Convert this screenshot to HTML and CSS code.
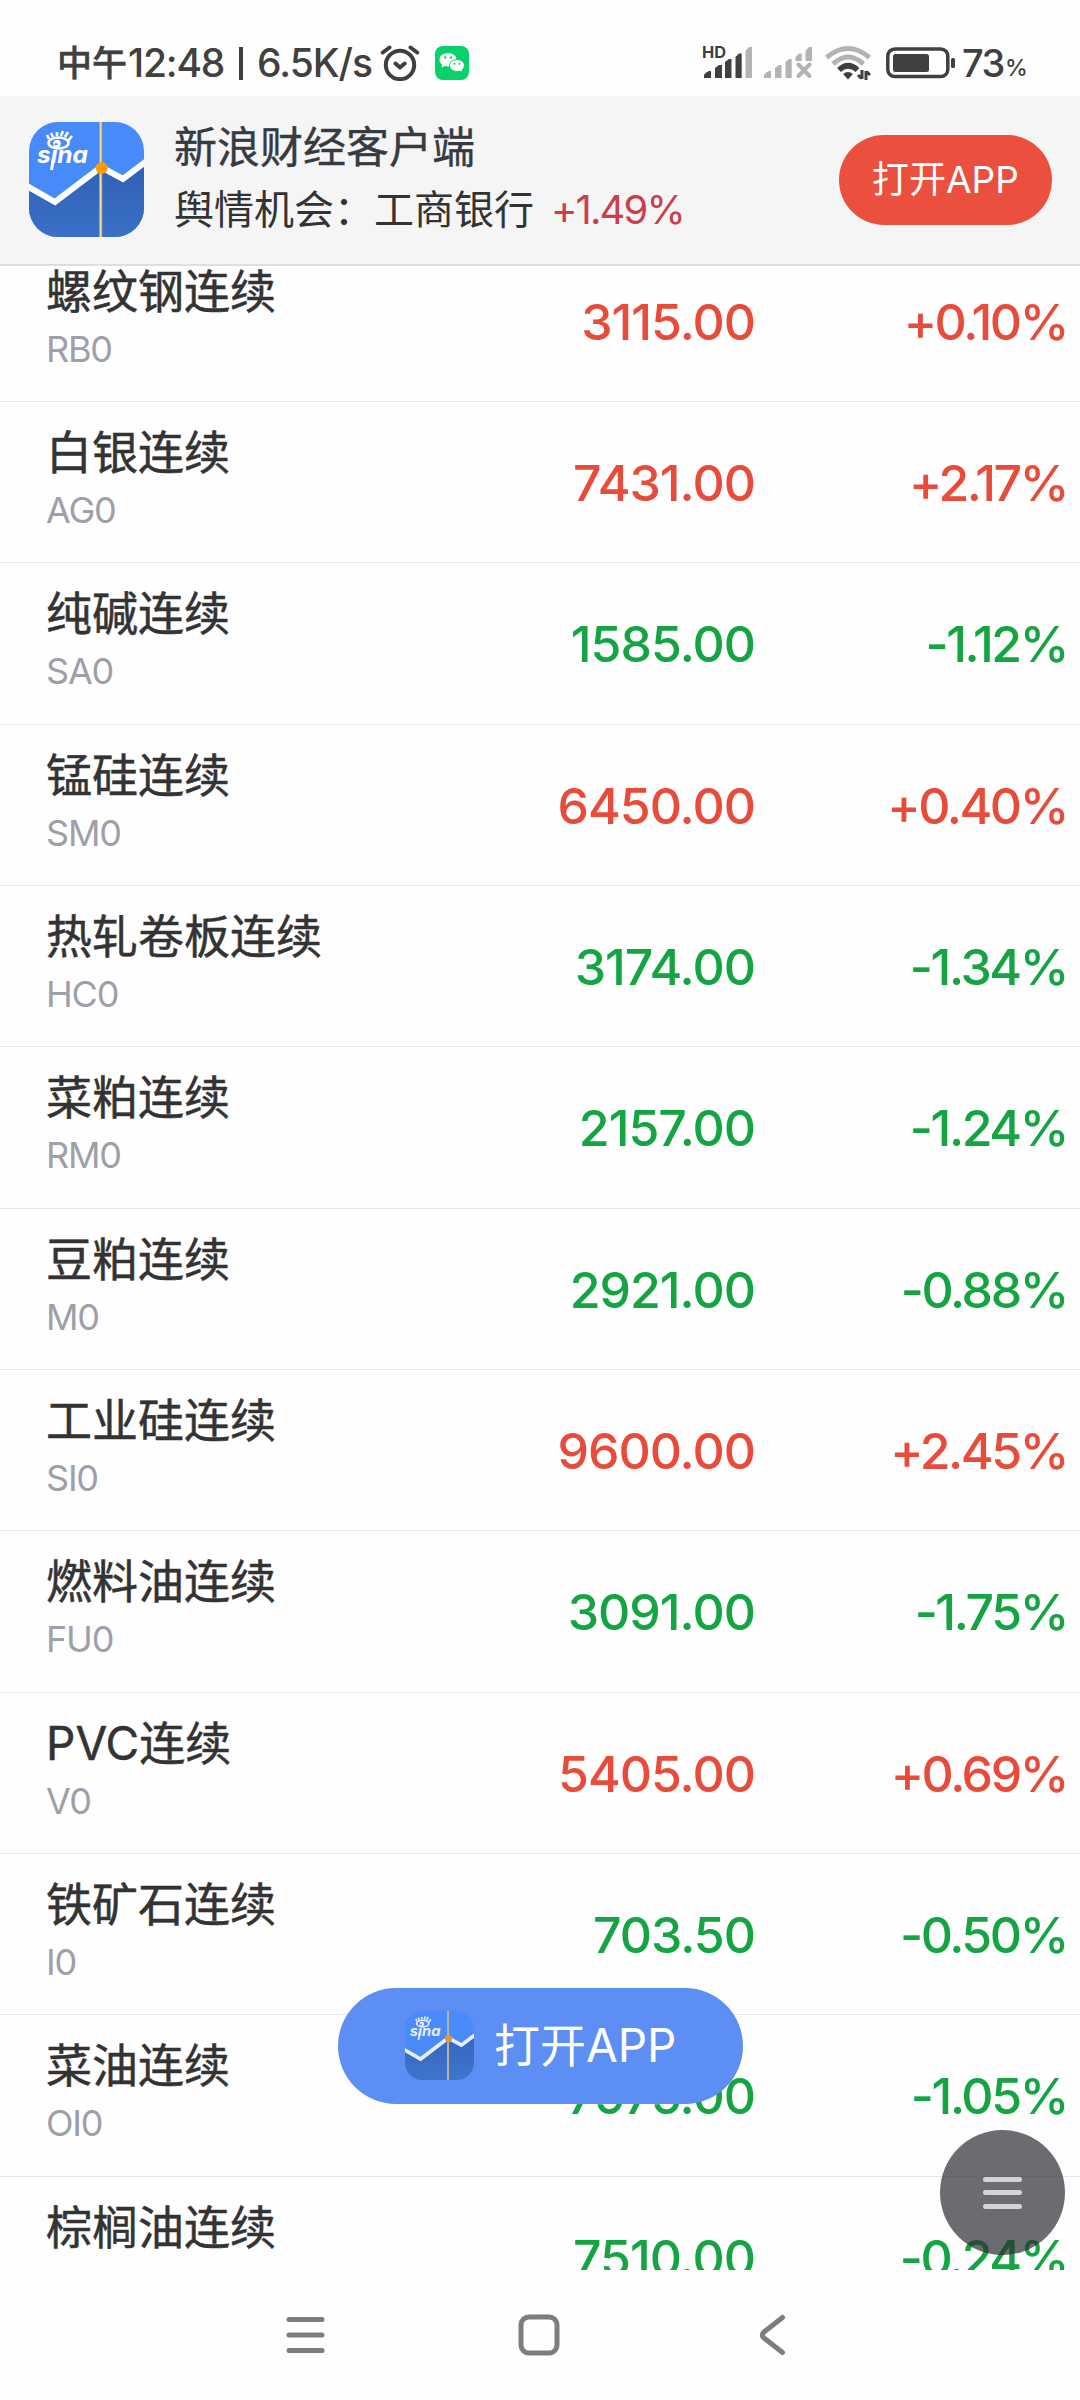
FILE: index.html
```html
<!DOCTYPE html>
<html lang="zh-CN">
<head>
  <meta charset="UTF-8">
  <meta name="viewport" content="width=device-width, initial-scale=1.0">
  <title>新浪财经</title>
  <link rel="stylesheet" href="styles.css">
</head>
<body>

<!-- app logo, used in the header and in the floating button -->
<svg class="defs" width="0" height="0">
  <defs>
    <linearGradient id="shade" x1="0" y1="0" x2="0" y2="1">
      <stop offset="0" stop-color="#2f61b5"/>
      <stop offset="1" stop-color="#3b70c8"/>
    </linearGradient>
    <clipPath id="logo-clip"><rect width="115" height="115" rx="29"/></clipPath>
  </defs>
  <symbol id="logo" viewBox="0 0 115 115">
    <g clip-path="url(#logo-clip)">
      <rect width="115" height="115" fill="#478bfb"/>
      <path d="M0 65 L26 79 L72 46 L94 57 L115 41 V115 H0Z" fill="url(#shade)"/>
      <path d="M-4 63 L26 80 L72 45 L94 57 L119 38" fill="none" stroke="#fff" stroke-width="6"/>
      <rect x="70" width="3.4" height="115" fill="#8f9789"/>
      <rect x="70.8" width="1.7" height="115" fill="#f3df9a"/>
      <circle cx="72.700" cy="46" r="6" fill="#ff9a05"/>
      <ellipse cx="29.500" cy="21" rx="10" ry="5.500" fill="none" stroke="#fff" stroke-width="2.600"/>
      <circle cx="28" cy="21.500" r="3.800" fill="#fff"/>
      <circle cx="27" cy="22.500" r="1.500" fill="#478bfb"/>
      <path d="M20 17 L18 13 M24 15 L22 11 M28 14 L28 10 M32 14 L34 9 M36 15 L39 10 M39 19 L43 14" stroke="#fff" stroke-width="2.600"/>
      <text class="logo-text" x="8" y="41" textLength="51" lengthAdjust="spacingAndGlyphs">sina</text>
      <path d="M24.500 36 L22.500 48" stroke="#fff" stroke-width="3"/>
    </g>
  </symbol>
</svg>

<div class="status-bar">
  <span class="clock-cn">中午</span>
  <span class="clock">12:48</span>
  <span class="divider"></span>
  <span class="speed">6.5K/s</span>
  <svg class="alarm" width="40" height="36" viewBox="0 0 40 36" fill="none" stroke="#404040" stroke-width="4" stroke-linecap="round" stroke-linejoin="round">
    <circle cx="20" cy="20" r="14.2"/>
    <path d="M2.8 7.5 L9.5 2.5 M37.2 7.5 L30.5 2.5 M15.5 18.5 L20 22.5 L24.7 18.5"/>
  </svg>
  <svg class="wechat" width="34" height="34" viewBox="0 0 34 34">
    <rect width="34" height="34" rx="8" fill="#05d268"/>
    <path d="M13 7c-5 0-8.500 3-8.500 6.700 0 2 1.100 3.800 2.700 5l-.6 2.800 3.200-1.600c1 .3 2.100.5 3.200.5 5 0 8.500-3 8.500-6.700S18 7 13 7z" fill="#fff"/>
    <path d="M22 13.500c-4.200 0-7.400 2.600-7.400 6s3.200 6 7.400 6c1 0 2-.2 2.800-.5l2.800 1.500-.6-2.600c1.500-1.100 2.400-2.700 2.400-4.400 0-3.400-3.200-6-7.400-6z" fill="#fff" stroke="#05d268" stroke-width="1"/>
    <g fill="#05d268">
      <circle cx="10.300" cy="11.500" r="1.200"/><circle cx="16" cy="11.500" r="1.200"/>
      <circle cx="19.500" cy="17.800" r="1"/><circle cx="24.500" cy="17.800" r="1"/>
    </g>
  </svg>

  <div class="status-right">
    <svg width="175" height="40" viewBox="700 44 175 40">
      <text class="hd" x="702" y="59" textLength="24" lengthAdjust="spacingAndGlyphs">HD</text>
      <g fill="#404040">
        <path d="M704 79 V76 Q705 73.500 709 72 H711 V79Z"/>
        <path d="M715 79 V69 L719 66 H722 V79Z"/>
        <path d="M725 79 V63 L729 60 H731.500 V79Z"/>
        <path d="M735.500 79 V58 L739 54.500 H741.700 V79Z"/>
      </g>
      <g fill="#b3b3b3">
        <path d="M745.500 79 V52 L749 48 H752 V79Z"/>
        <path d="M764 79 V76 Q765 73.500 769 72 H771 V79Z"/>
        <path d="M775 79 V69 L779 66 H781.500 V79Z"/>
        <path d="M785.500 79 V63 L789 60 H791.700 V79Z"/>
        <path d="M795.500 62 V58 L799 54.500 H801.700 V62Z"/>
        <path d="M805.500 62 V52 L809 48 H812 V62Z"/>
      </g>
      <path d="M798.500 65.500 L809.500 77 M809.500 65.500 L798.500 77" stroke="#b3b3b3" stroke-width="4" stroke-linecap="round"/>
      <g fill="none" stroke-width="5">
        <path d="M826.500 58.500 Q848 40.500 869.500 58.500" stroke="#b3b3b3"/>
        <path d="M833 65 Q848 51 863.500 65" stroke="#b3b3b3"/>
        <path d="M839 71 Q848 62.500 857.500 71" stroke="#404040" stroke-width="5.500"/>
      </g>
      <path d="M843 75 Q848 71 853 75 L848 80.500Z" fill="#404040"/>
      <path d="M862 71 V80 M858 76 L861.500 79.500 M866 81 V72 M870 76 L866.500 72.500" stroke="#404040" stroke-width="3"/>
    </svg>
    <svg class="battery" width="70" height="32" viewBox="0 0 70 32">
      <rect x="1.800" y="2" width="60" height="27.500" rx="7" fill="none" stroke="#404040" stroke-width="3.500"/>
      <rect x="7" y="7" width="36" height="18" rx="2.500" fill="#404040"/>
      <rect x="65" y="11" width="4" height="10" rx="1.500" fill="#404040"/>
    </svg>
    <span class="percent">73</span><span class="percent-sign">%</span>
  </div>
</div>

<header class="app-header">
  <svg class="app-icon" width="115" height="115"><use href="#logo"/></svg>
  <div class="app-info">
    <div class="app-title">新浪财经客户端</div>
    <div class="app-sub">舆情机会：工商银行<span class="app-change">+1.49%</span></div>
  </div>
  <a class="open-btn">打开<span>APP</span></a>
</header>

<main class="list">
  <div class="row up">
    <div class="info"><div class="name">螺纹钢连续</div><div class="code">RB0</div></div>
    <div class="price">3115.00</div><div class="change">+0.10%</div>
  </div>
  <div class="row up">
    <div class="info"><div class="name">白银连续</div><div class="code">AG0</div></div>
    <div class="price">7431.00</div><div class="change">+2.17%</div>
  </div>
  <div class="row down">
    <div class="info"><div class="name">纯碱连续</div><div class="code">SA0</div></div>
    <div class="price">1585.00</div><div class="change">-1.12%</div>
  </div>
  <div class="row up">
    <div class="info"><div class="name">锰硅连续</div><div class="code">SM0</div></div>
    <div class="price">6450.00</div><div class="change">+0.40%</div>
  </div>
  <div class="row down">
    <div class="info"><div class="name">热轧卷板连续</div><div class="code">HC0</div></div>
    <div class="price">3174.00</div><div class="change">-1.34%</div>
  </div>
  <div class="row down">
    <div class="info"><div class="name">菜粕连续</div><div class="code">RM0</div></div>
    <div class="price">2157.00</div><div class="change">-1.24%</div>
  </div>
  <div class="row down">
    <div class="info"><div class="name">豆粕连续</div><div class="code">M0</div></div>
    <div class="price">2921.00</div><div class="change">-0.88%</div>
  </div>
  <div class="row up">
    <div class="info"><div class="name">工业硅连续</div><div class="code">SI0</div></div>
    <div class="price">9600.00</div><div class="change">+2.45%</div>
  </div>
  <div class="row down">
    <div class="info"><div class="name">燃料油连续</div><div class="code">FU0</div></div>
    <div class="price">3091.00</div><div class="change">-1.75%</div>
  </div>
  <div class="row up">
    <div class="info"><div class="name">PVC连续</div><div class="code">V0</div></div>
    <div class="price">5405.00</div><div class="change">+0.69%</div>
  </div>
  <div class="row down">
    <div class="info"><div class="name">铁矿石连续</div><div class="code">I0</div></div>
    <div class="price">703.50</div><div class="change">-0.50%</div>
  </div>
  <div class="row down">
    <div class="info"><div class="name">菜油连续</div><div class="code">OI0</div></div>
    <div class="price">7975.00</div><div class="change">-1.05%</div>
  </div>
  <div class="row down">
    <div class="info"><div class="name">棕榈油连续</div></div>
    <div class="price">7510.00</div><div class="change">-0.24%</div>
  </div>
</main>

<a class="float-open">
  <svg width="69" height="69"><use href="#logo"/></svg>
  <span class="float-text">打开<span>APP</span></span>
</a>

<div class="float-menu"><i></i><i></i><i></i></div>

<nav class="nav-bar">
  <svg width="40" height="42" viewBox="0 0 40 42"><path d="M3 5.500H36M3 21H36M3 36.500H36"/></svg>
  <svg class="home" width="42" height="42" viewBox="0 0 42 42"><rect x="3" y="3" width="36" height="36" rx="8"/></svg>
  <svg width="28" height="42" viewBox="0 0 28 42"><path d="M23.500 3.500 L5 18 Q1.500 21 5 24 L23.500 38.500"/></svg>
</nav>

</body>
</html>
```

FILE: styles.css
```css
* {
  box-sizing: border-box;
}

body {
  margin: 0;
  width: 1080px;
  height: 2400px;
  position: relative;
  overflow: hidden;
  background-color: #fefefe;
  color: #333;
  font-family: Inter, "Noto Sans CJK SC", sans-serif;
}

.defs {
  position: absolute;
}

.logo-text {
  font-family: Inter, sans-serif;
  font-size: 23px;
  font-weight: 700;
  font-style: italic;
  fill: #fff;
}

/* status bar */
.status-bar {
  height: 96px;
  padding: 30px 53px 0 57px;
  display: flex;
  align-items: center;
  color: #404040;
  font-weight: 500;
  line-height: 66px;
}

.clock-cn {
  width: 71px;
  font-size: 35px;
  -webkit-text-stroke: 0.5px;
}

.clock,
.speed {
  font-size: 39px;
  white-space: nowrap;
}

.clock {
  width: 96px;
  letter-spacing: -1.2px;
}

.divider {
  width: 4px;
  height: 33px;
  margin: 0 14px 0 15px;
  background-color: #404040;
}

.speed {
  width: 117px;
  letter-spacing: -1px;
}

.alarm {
  margin-left: 6px;
}

.wechat {
  margin-left: 15px;
}

.status-right {
  margin-left: auto;
  display: flex;
  align-items: center;
}

.hd {
  font-size: 15.5px;
  font-weight: 700;
  fill: #404040;
}

.battery {
  margin-left: 11px;
}

.percent {
  width: 43px;
  margin-left: 6px;
  font-size: 38px;
  letter-spacing: -1.5px;
}

.percent-sign {
  width: 22px;
  padding-top: 9px;
  font-size: 23px;
}

/* download banner */
.app-header {
  height: 170px;
  padding: 0 28px 0 29px;
  display: flex;
  align-items: center;
  background-color: #f5f5f5;
  border-bottom: 2px solid #dedede;
}

.app-icon {
  margin-bottom: 2px;
}

.app-info {
  margin: 0 auto 2px 30px;
  white-space: nowrap;
}

.app-title {
  font-size: 43px;
  line-height: 62px;
  color: #363b42;
  -webkit-text-stroke: 0.4px;
}

.app-sub {
  font-size: 40px;
  line-height: 64px;
}

.app-change {
  margin-left: 17px;
  letter-spacing: -1.9px;
  color: #c8404a;
}

.open-btn {
  width: 213px;
  height: 90px;
  border-radius: 45px;
  background-color: #eb4f3d;
  color: #fff;
  font-size: 37px;
  line-height: 90px;
  text-align: center;
}

/* quotes */
.list {
  height: 2004px;
  overflow: hidden;
}

.row {
  height: 161.36px;
  padding: 0 13px 0 46px;
  display: grid;
  grid-template-columns: 380px 329px 1fr;
  border-bottom: 1px solid #e4e6e8;
}

.row:first-child {
  margin-top: -25.5px;
}

.info {
  padding-top: 19px;
}

.name {
  font-size: 46px;
  line-height: 62px;
  -webkit-text-stroke: 0.5px;
}

.code {
  margin-top: 5px;
  font-size: 36px;
  line-height: 44px;
  letter-spacing: -1.2px;
  color: #9f9fa9;
}

.price,
.change {
  font-size: 50px;
  font-weight: 500;
  line-height: 162px;
  text-align: right;
}

.price {
  letter-spacing: -1px;
}

.change {
  letter-spacing: -2.4px;
}

.up .price,
.up .change {
  color: #e94b3b;
}

.down .price,
.down .change {
  color: #14a442;
}

/* floating controls over the list */
.float-open {
  position: absolute;
  left: 338px;
  top: 1988px;
  width: 405px;
  height: 116px;
  padding: 0 0 2px 67px;
  display: flex;
  align-items: center;
  gap: 20px;
  border-radius: 58px;
  background-color: #5d8ef4;
  color: #fff;
}

.float-open svg {
  opacity: 0.85;
}

.float-text {
  padding-bottom: 6px;
  font-size: 46px;
  white-space: nowrap;
}

.float-menu {
  position: absolute;
  left: 940px;
  top: 2130px;
  width: 125px;
  height: 125px;
  display: flex;
  flex-direction: column;
  align-items: center;
  justify-content: center;
  gap: 8.5px;
  border-radius: 50%;
  background-color: rgba(44, 46, 50, 0.7);
}

.float-menu i {
  width: 39px;
  height: 5px;
  border-radius: 3px;
  background-color: #d4d4d6;
}

/* system navigation */
.nav-bar {
  height: 130px;
  padding: 0 293px 0 286px;
  display: flex;
  align-items: center;
  justify-content: space-between;
}

.nav-bar svg {
  fill: none;
  stroke: #7d7d7d;
  stroke-width: 5;
  stroke-linecap: round;
  stroke-linejoin: round;
}

.nav-bar .home {
  margin-right: 8px;
}
```
